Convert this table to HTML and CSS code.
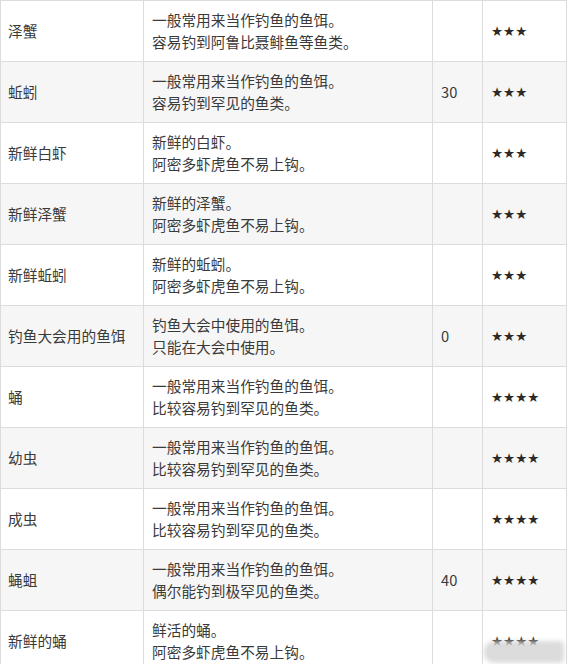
FILE: index.html
```html
<!DOCTYPE html>
<html lang="zh-CN">
<head>
<meta charset="utf-8">
<link rel="stylesheet" href="styles.css">
</head>
<body>
<table class="bait-table">
  <colgroup>
    <col class="c-name">
    <col class="c-desc">
    <col class="c-num">
    <col class="c-rank">
  </colgroup>
  <tbody>
    <tr><td>泽蟹</td><td>一般常用来当作钓鱼的鱼饵。<br>容易钓到阿鲁比聂鲱鱼等鱼类。</td><td></td><td class="stars">★★★</td></tr>
    <tr class="alt"><td>蚯蚓</td><td>一般常用来当作钓鱼的鱼饵。<br>容易钓到罕见的鱼类。</td><td>30</td><td class="stars">★★★</td></tr>
    <tr><td>新鲜白虾</td><td>新鲜的白虾。<br>阿密多虾虎鱼不易上钩。</td><td></td><td class="stars">★★★</td></tr>
    <tr class="alt"><td>新鲜泽蟹</td><td>新鲜的泽蟹。<br>阿密多虾虎鱼不易上钩。</td><td></td><td class="stars">★★★</td></tr>
    <tr><td>新鲜蚯蚓</td><td>新鲜的蚯蚓。<br>阿密多虾虎鱼不易上钩。</td><td></td><td class="stars">★★★</td></tr>
    <tr class="alt"><td>钓鱼大会用的鱼饵</td><td>钓鱼大会中使用的鱼饵。<br>只能在大会中使用。</td><td>0</td><td class="stars">★★★</td></tr>
    <tr><td>蛹</td><td>一般常用来当作钓鱼的鱼饵。<br>比较容易钓到罕见的鱼类。</td><td></td><td class="stars">★★★★</td></tr>
    <tr class="alt"><td>幼虫</td><td>一般常用来当作钓鱼的鱼饵。<br>比较容易钓到罕见的鱼类。</td><td></td><td class="stars">★★★★</td></tr>
    <tr><td>成虫</td><td>一般常用来当作钓鱼的鱼饵。<br>比较容易钓到罕见的鱼类。</td><td></td><td class="stars">★★★★</td></tr>
    <tr class="alt"><td>蝇蛆</td><td>一般常用来当作钓鱼的鱼饵。<br>偶尔能钓到极罕见的鱼类。</td><td>40</td><td class="stars">★★★★</td></tr>
    <tr><td>新鲜的蛹</td><td>鲜活的蛹。<br>阿密多虾虎鱼不易上钩。</td><td></td><td class="stars">★★★★</td></tr>
  </tbody>
</table>
<div class="watermark"></div>
</body>
</html>
```
FILE: styles.css
```css
html, body {
  margin: 0;
  padding: 0;
  background: #ffffff;
  overflow: hidden;
}
body {
  font-family: "Noto Sans CJK SC", "Noto Sans", sans-serif;
  color: #3a3a3a;
  font-size: 14.7px;
  position: relative;
  height: 664px;
}
.bait-table {
  border-collapse: collapse;
  table-layout: fixed;
  width: 566px;
}
.c-name { width: 143px; }
.c-desc { width: 289px; }
.c-num { width: 50px; }
.c-rank { width: 84px; }
.bait-table td {
  border: 1px solid #dcdcdc;
  height: 61px;
  padding: 0 8px;
  vertical-align: middle;
  line-height: 22px;
  box-sizing: border-box;
  white-space: nowrap;
}
.bait-table td:first-child {
  padding-left: 7px;
}
.bait-table tr.alt td {
  background: #f6f6f6;
}
.stars {
  font-family: "DejaVu Sans", sans-serif;
  font-size: 13.5px;
  color: #2b2b2b;
}
.watermark {
  position: absolute;
  left: 484px;
  top: 641px;
  width: 80px;
  height: 22px;
  border-radius: 10px 4px 4px 10px;
  background: #d6d6d6;
  filter: blur(2px);
  opacity: 0.85;
}
```
